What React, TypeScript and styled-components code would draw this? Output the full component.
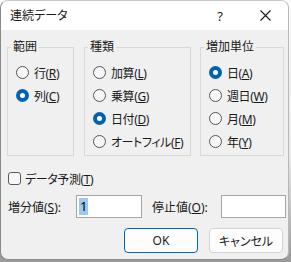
import React from "react";
import styled, { createGlobalStyle } from "styled-components";

const Global = createGlobalStyle`
  html, body { margin: 0; padding: 0; }
  body {
    width: 291px; height: 262px; overflow: hidden;
    background: linear-gradient(180deg, #fbfbfb 0%, #e8e8e8 60%, #9a9a9a 100%);
    font-family: "Noto Sans", "Noto Sans CJK JP", sans-serif;
    font-size: 12px;
    color: #1a1a1a;
    font-feature-settings: "palt";
  }
`;

const Window = styled.div`
  box-sizing: border-box;
  width: 289px;
  height: 260px;
  border: 1px solid #8a8a8a;
  border-top-color: #c8c8c8;
  border-right-color: #b8b8b8;
  border-radius: 8px;
  background: #f0f0f0;
  overflow: hidden;
  display: flex;
  flex-direction: column;
`;

const TitleBar = styled.div`
  height: 29px;
  background: #ffffff;
  display: flex;
  align-items: center;
  padding-left: 9px;
  flex-shrink: 0;
`;

const Title = styled.div`
  flex: 1;
  font-size: 12px;
  line-height: 14px;
  margin-top: 1px;
`;

const TitleButton = styled.div<{ $w: number }>`
  width: ${(p) => p.$w}px;
  height: 29px;
  display: flex;
  align-items: center;
  justify-content: center;
  font-size: 13px;
`;

const Body = styled.div`
  display: flex;
  flex-direction: column;
  padding: 10px 0 0 6px;
`;

const GroupRow = styled.div`
  display: flex;
  height: 116px;
`;

const Group = styled.fieldset<{ $w: number; $ml: number }>`
  box-sizing: border-box;
  width: ${(p) => p.$w}px;
  height: 116px;
  margin: 0 0 0 ${(p) => p.$ml}px;
  padding: 0;
  border: 1px solid #d9d9d9;
  min-width: 0;
`;

const Legend = styled.legend`
  margin-left: 3px;
  padding: 0 2px;
  font-size: 12px;
  line-height: 14px;
`;

const OptionList = styled.div`
  display: flex;
  flex-direction: column;
  padding: 7px 0 0 8px;
`;

const OptionRow = styled.div`
  height: 23px;
  display: flex;
  align-items: center;
  gap: 5px;
  white-space: nowrap;
  letter-spacing: -0.4px;
`;

const Radio = styled.span<{ $on?: boolean }>`
  box-sizing: border-box;
  width: 13px;
  height: 13px;
  border-radius: 50%;
  flex-shrink: 0;
  border: ${(p) => (p.$on ? "4px solid #0063b1" : "1px solid #555")};
  background: ${(p) => (p.$on ? "#ffffff" : "#f7f7f7")};
`;

const CheckRow = styled.div`
  display: flex;
  align-items: center;
  gap: 4px;
  margin-top: 16px;
  height: 13px;
  letter-spacing: -0.4px;
`;

const CheckBox = styled.span`
  box-sizing: border-box;
  width: 13px;
  height: 13px;
  border: 1px solid #5a5a5a;
  border-radius: 3px;
  background: #f8f8f8;
  margin-left: 1px;
`;

const InputRow = styled.div`
  display: flex;
  align-items: center;
  margin-top: 10px;
  height: 23px;
  padding-left: 1px;
`;

const FieldLabel = styled.span<{ $w: number; $pl?: number }>`
  box-sizing: border-box;
  width: ${(p) => p.$w}px;
  padding-left: ${(p) => p.$pl ?? 0}px;
  white-space: nowrap;
`;

const TextBox = styled.div<{ $w: number }>`
  box-sizing: border-box;
  width: ${(p) => p.$w}px;
  height: 23px;
  border: 1px solid #a5a5a5;
  background: #ffffff;
  display: flex;
  align-items: center;
  padding-left: 2px;
  font-size: 13px;
`;

const Selected = styled.span`
  background: #9cc8f1;
  color: #000;
  line-height: 17px;
  padding: 0 1px;
`;

const ButtonRow = styled.div`
  display: flex;
  justify-content: flex-end;
  gap: 11px;
  margin-top: 10px;
  padding-right: 5px;
`;

const Button = styled.div<{ $primary?: boolean }>`
  box-sizing: border-box;
  width: 74px;
  height: 25px;
  border-radius: 4px;
  background: #fdfdfd;
  border: 1px solid ${(p) => (p.$primary ? "#0067c0" : "#d3d3d3")};
  display: flex;
  align-items: center;
  justify-content: center;
  font-size: 12px;
`;

type Opt = { label: string; key: string; on?: boolean };

const groups: { title: string; w: number; ml: number; opts: Opt[] }[] = [
  { title: "範囲", w: 67, ml: 0, opts: [{ label: "行", key: "R" }, { label: "列", key: "C", on: true }] },
  {
    title: "種類",
    w: 107,
    ml: 10,
    opts: [
      { label: "加算", key: "L" },
      { label: "乗算", key: "G" },
      { label: "日付", key: "D", on: true },
      { label: "オートフィル", key: "F" },
    ],
  },
  {
    title: "増加単位",
    w: 84,
    ml: 9,
    opts: [
      { label: "日", key: "A", on: true },
      { label: "週日", key: "W" },
      { label: "月", key: "M" },
      { label: "年", key: "Y" },
    ],
  },
];

export default function App() {
  return (
    <>
      <Global />
      <Window>
        <TitleBar>
          <Title>連続データ</Title>
          <TitleButton $w={44}>?</TitleButton>
          <TitleButton $w={46}>
            <svg width="11" height="11" viewBox="0 0 11 11">
              <path d="M0.5 0.5 L10.5 10.5 M10.5 0.5 L0.5 10.5" stroke="#1a1a1a" strokeWidth="1.1" fill="none" />
            </svg>
          </TitleButton>
        </TitleBar>
        <Body>
          <GroupRow>
            {groups.map((g) => (
              <Group key={g.title} $w={g.w} $ml={g.ml}>
                <Legend>{g.title}</Legend>
                <OptionList>
                  {g.opts.map((o) => (
                    <OptionRow key={o.key}>
                      <Radio $on={o.on} />
                      <span>
                        {o.label}(<u>{o.key}</u>)
                      </span>
                    </OptionRow>
                  ))}
                </OptionList>
              </Group>
            ))}
          </GroupRow>
          <CheckRow>
            <CheckBox />
            <span>
              データ予測(<u>T</u>)
            </span>
          </CheckRow>
          <InputRow>
            <FieldLabel $w={68}>
              増分値(<u>S</u>):
            </FieldLabel>
            <TextBox $w={66}>
              <Selected>1</Selected>
            </TextBox>
            <FieldLabel $w={79} $pl={10}>
              停止値(<u>O</u>):
            </FieldLabel>
            <TextBox $w={65} />
          </InputRow>
          <ButtonRow>
            <Button $primary>OK</Button>
            <Button>キャンセル</Button>
          </ButtonRow>
        </Body>
      </Window>
    </>
  );
}
